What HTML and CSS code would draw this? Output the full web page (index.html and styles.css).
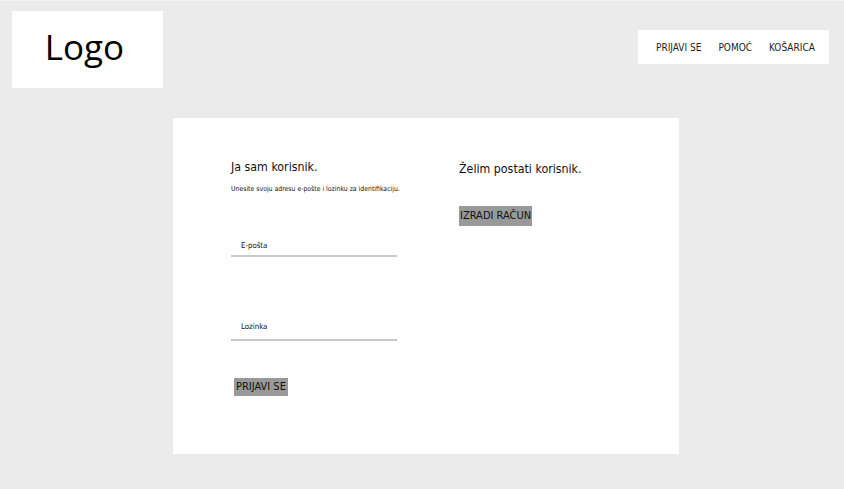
FILE: index.html
```html
<!DOCTYPE html>
<html lang="hr">
<head>
<meta charset="utf-8">
<title>Prijava</title>
<link rel="stylesheet" href="styles.css">
</head>
<body>
<header class="top">
  <div class="logo">Logo</div>
  <nav class="nav">
    <a href="#">PRIJAVI SE</a>
    <a href="#">POMOĆ</a>
    <a href="#">KOŠARICA</a>
  </nav>
</header>
<main class="card">
  <section class="col col-login">
    <h2 class="title">Ja sam korisnik.</h2>
    <p class="hint">Unesite svoju adresu e-pošte i lozinku za identifikaciju.</p>
    <div class="field field-first"><span class="label">E-pošta</span></div>
    <div class="field field-second"><span class="label">Lozinka</span></div>
    <button class="btn btn-login">PRIJAVI SE</button>
  </section>
  <section class="col col-register">
    <h2 class="title">Želim postati korisnik.</h2>
    <button class="btn btn-register">IZRADI RAČUN</button>
  </section>
</main>
</body>
</html>
```
FILE: styles.css
```css
html, body {
  margin: 0;
  padding: 0;
}
body {
  background: #ebebeb;
  font-family: "DejaVu Sans Condensed", "DejaVu Sans", Verdana, sans-serif;
  color: #111;
  min-height: 489px;
  border-top: 1px solid #f4f4f4;
  box-sizing: border-box;
}
.top {
  display: flex;
  justify-content: space-between;
  align-items: flex-start;
  padding: 10px 15px 0 12px;
}
.logo {
  width: 151px;
  height: 77px;
  background: #fff;
  display: flex;
  align-items: center;
  justify-content: center;
  font-family: "Open Sans", sans-serif;
  font-size: 35px;
  color: #000;
  padding: 0 6px 7px 0;
  box-sizing: border-box;
}
.nav {
  margin-top: 19px;
  height: 34px;
  width: 191px;
  background: #fff;
  display: flex;
  align-items: center;
  justify-content: flex-start;
  gap: 17px;
  padding-left: 18px;
  box-sizing: border-box;
}
.nav a {
  color: #222;
  text-decoration: none;
  font-size: 10px;
}
.card {
  margin: 30px 0 0 173px;
  width: 506px;
  height: 336px;
  background: #fff;
  display: grid;
  grid-template-columns: 228px 1fr;
  padding: 40px 0 0 58px;
  box-sizing: border-box;
}
.col {
  display: flex;
  flex-direction: column;
  align-items: flex-start;
}
.title {
  margin: 0;
  font-weight: normal;
  font-size: 12.3px;
  line-height: 18px;
}
.col-register .title {
  margin-top: 2px;
}
.hint {
  margin: 9px 0 0;
  font-size: 6.85px;
  line-height: 9px;
}
.field {
  width: 166px;
  border-bottom: 2px solid #c8c8c8;
  box-sizing: border-box;
  padding: 0 0 4px 10px;
}
.field-first {
  margin-top: 46px;
}
.field-second {
  margin-top: 64px;
  padding-bottom: 7px;
}
.label {
  font-size: 7.8px;
  line-height: 11px;
  display: block;
}
.btn {
  border: none;
  background: #999;
  color: #111;
  font-family: "DejaVu Sans Condensed", "DejaVu Sans", Verdana, sans-serif;
  font-size: 11px;
  line-height: 18px;
  padding: 0 2px;
  border-radius: 0;
}
.btn-login {
  margin: 37px 0 0 3px;
  height: 18px;
}
.btn-register {
  margin-top: 28px;
  height: 20px;
  padding: 0 1px;
}
```
